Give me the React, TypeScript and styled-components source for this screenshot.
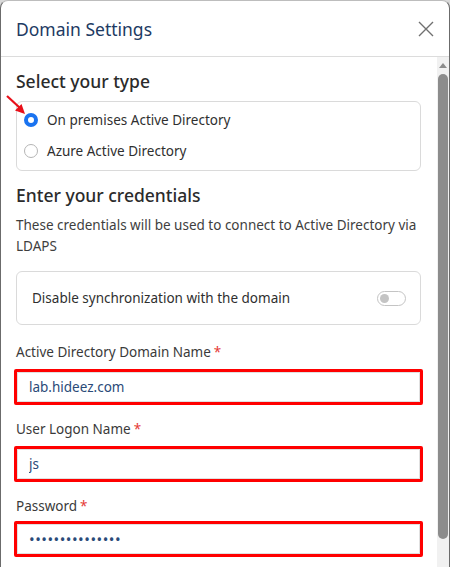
import React from "react";
import styled, { createGlobalStyle } from "styled-components";

const GlobalStyle = createGlobalStyle`
  html, body {
    margin: 0;
    padding: 0;
    background: #d9d9d9;
  }
  body {
    font-family: "Noto Sans", "Liberation Sans", sans-serif;
  }
  * { box-sizing: border-box; }
`;

const Modal = styled.div`
  width: 450px;
  height: 567px;
  background: #fff;
  border-left: 1px solid #6b6b6b;
  border-right: 1px solid #6b6b6b;
  border-top: 1px solid #bdbdbd;
  border-radius: 8px 8px 0 0;
  display: flex;
  flex-direction: column;
  overflow: hidden;
`;

const Header = styled.div`
  height: 56px;
  flex: none;
  display: flex;
  align-items: center;
  justify-content: space-between;
  padding: 0 14px 0 15px;
  border-bottom: 1px solid #dcdcdc;
`;

const Title = styled.h1`
  margin: 0;
  font-size: 17.5px;
  font-weight: 400;
  color: #1d3a63;
`;

const CloseButton = styled.button`
  border: 0;
  background: none;
  padding: 0;
  width: 18px;
  height: 18px;
  display: flex;
  align-items: center;
  justify-content: center;
  cursor: pointer;
`;

const BodyRow = styled.div`
  flex: 1;
  display: flex;
  min-height: 0;
`;

const Content = styled.div`
  flex: 1;
  min-width: 0;
  overflow: hidden;
  padding: 12px 16px 40px 15px;
  position: relative;
`;

const ScrollTrack = styled.div`
  width: 12px;
  flex: none;
  background: #f1f1f1;
  display: flex;
  flex-direction: column;
  align-items: center;
`;

const ScrollArrow = styled.span`
  margin-top: 6px;
  width: 0;
  height: 0;
  border-left: 4px solid transparent;
  border-right: 4px solid transparent;
  border-bottom: 5px solid #8c8c8c;
`;

const ScrollThumb = styled.span`
  margin-top: 6px;
  width: 10px;
  height: 465px;
  border-radius: 5px;
  background: #8c8c8c;
`;

const SectionTitle = styled.h2`
  margin: 0 0 8px;
  font-size: 17.5px;
  font-weight: 500;
  color: #2b2b2b;
  line-height: 24px;
`;

const Card = styled.div<{ $pad?: string; $mb?: number }>`
  border: 1px solid #dadada;
  border-radius: 6px;
  padding: ${(p) => p.$pad || "0"};
  margin-bottom: ${(p) => p.$mb ?? 0}px;
`;

const RadioRow = styled.label`
  display: flex;
  align-items: center;
  gap: 9px;
  height: 31px;
  padding-left: 7px;
  font-size: 13.5px;
  color: #2f2f2f;
`;

const RadioDot = styled.span<{ $checked?: boolean }>`
  width: 14px;
  height: 14px;
  border-radius: 50%;
  flex: none;
  border: ${(p) => (p.$checked ? "4px solid #1a73f0" : "1px solid #b5b5b5")};
  background: #fff;
`;

const Paragraph = styled.p`
  margin: 0 0 14px;
  font-size: 13.5px;
  line-height: 21px;
  color: #3e3e3e;
`;

const ToggleCard = styled(Card)`
  display: flex;
  align-items: center;
  justify-content: space-between;
  height: 54px;
  padding: 0 14px 0 15px;
  font-size: 13.5px;
  color: #2f2f2f;
  margin-bottom: 17px;
`;

const Switch = styled.span`
  width: 29px;
  height: 15px;
  border: 1px solid #c4c4c4;
  border-radius: 8px;
  display: flex;
  align-items: center;
  padding-left: 2px;

  &::before {
    content: "";
    width: 9px;
    height: 9px;
    border-radius: 50%;
    background: #c4c4c4;
  }
`;

const Field = styled.div`
  display: flex;
  flex-direction: column;
  margin-bottom: 14px;
`;

const Label = styled.label<{ $mb?: number }>`
  font-size: 13.5px;
  color: #3a3a3a;
  line-height: 20px;
  margin-bottom: ${(p) => p.$mb ?? 7}px;
`;

const Star = styled.span`
  color: #e53935;
  margin-left: 3px;
`;

const Highlight = styled.div`
  border: 3px solid #ff0000;
  border-radius: 2px;
  margin: 0 -2px 0 -2px;
`;

const Input = styled.input<{ $dots?: boolean }>`
  width: 100%;
  height: 30px;
  border: 1px solid #e0e0e0;
  padding: 0 11px;
  font-family: inherit;
  font-size: ${(p) => (p.$dots ? "15px" : "13.5px")};
  color: #2a4a78;
  outline: none;
  letter-spacing: ${(p) => (p.$dots ? "0.5px" : "0")};
`;

const Arrow = styled.svg`
  position: absolute;
  left: 4px;
  top: 37px;
`;

export default function App() {
  return (
    <>
      <GlobalStyle />
      <Modal>
        <Header>
          <Title>Domain Settings</Title>
          <CloseButton aria-label="Close">
            <svg width="16" height="16" viewBox="0 0 16 16">
              <path d="M1 1L15 15M15 1L1 15" stroke="#707070" strokeWidth="1.4" />
            </svg>
          </CloseButton>
        </Header>
        <BodyRow>
          <Content>
            <Arrow width="23" height="23" viewBox="0 0 23 23">
              <path d="M2 2L15 14" stroke="#e8101a" strokeWidth="2.2" />
              <path d="M20 20L10 16.5L16.5 10Z" fill="#e8101a" />
            </Arrow>
            <SectionTitle>Select your type</SectionTitle>
            <Card $pad="2px 0 4px" $mb={12}>
              <RadioRow>
                <RadioDot $checked />
                On premises Active Directory
              </RadioRow>
              <RadioRow>
                <RadioDot />
                Azure Active Directory
              </RadioRow>
            </Card>
            <SectionTitle>Enter your credentials</SectionTitle>
            <Paragraph>
              These credentials will be used to connect to Active Directory via LDAPS
            </Paragraph>
            <ToggleCard>
              Disable synchronization with the domain
              <Switch />
            </ToggleCard>
            <Field>
              <Label>
                Active Directory Domain Name<Star>*</Star>
              </Label>
              <Highlight>
                <Input defaultValue="lab.hideez.com" />
              </Highlight>
            </Field>
            <Field>
              <Label>
                User Logon Name<Star>*</Star>
              </Label>
              <Highlight>
                <Input defaultValue="js" />
              </Highlight>
            </Field>
            <Field>
              <Label $mb={5}>
                Password<Star>*</Star>
              </Label>
              <Highlight>
                <Input type="password" $dots defaultValue="passwordpasswor" />
              </Highlight>
            </Field>
          </Content>
          <ScrollTrack>
            <ScrollArrow />
            <ScrollThumb />
          </ScrollTrack>
        </BodyRow>
      </Modal>
    </>
  );
}
